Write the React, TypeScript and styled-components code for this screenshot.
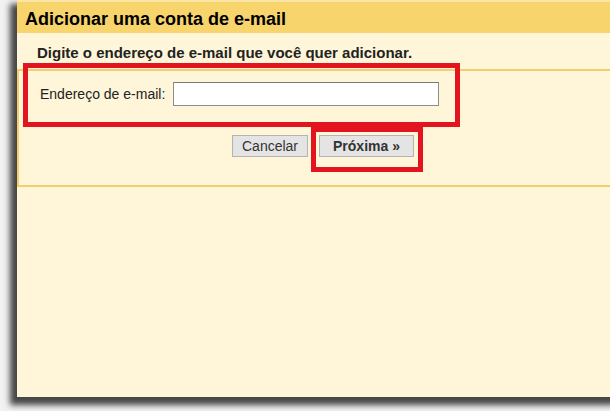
import * as React from 'react';
import styled, { createGlobalStyle } from 'styled-components';

const GlobalStyle = createGlobalStyle`
    html, body {
        margin: 0;
        padding: 0;
        background: #ffffff;
    }
    body {
        font-family: "Liberation Sans", Arial, sans-serif;
    }
`;

const Page = styled.div`
    position: relative;
    width: 610px;
    height: 411px;
    overflow: hidden;
    background: #f2f2f2;
`;

const Window = styled.div`
    margin-left: 17px;
    width: 610px;
    height: 397px;
    background: #fff6d9;
    box-shadow: -5px 6px 6px 2px rgba(60, 60, 60, 0.95);
    display: flex;
    flex-direction: column;
`;

const Header = styled.div`
    height: 33px;
    border-top: 2px solid #fae5a4;
    background: #f8d46c;
    display: flex;
    align-items: flex-end;
    padding: 0 0 3px 8px;
    box-sizing: border-box;
`;

const Title = styled.h1`
    margin: 0;
    font-size: 18px;
    font-weight: bold;
    color: #000;
`;

const Intro = styled.div`
    height: 36px;
    padding-left: 20px;
    display: flex;
    align-items: center;
    padding-top: 2px;
    box-sizing: border-box;
    font-size: 15px;
    font-weight: bold;
    color: #222;
`;

const Panel = styled.div`
    border-top: 2px solid #f3cf6c;
    border-left: 2px solid #f3cf6c;
    border-bottom: 2px solid #f3cf6c;
    padding: 11px 0 28px 21px;
    display: flex;
    flex-direction: column;
    gap: 29px;
`;

const FieldRow = styled.div`
    display: flex;
    align-items: center;
    gap: 8px;
    height: 24px;
`;

const Label = styled.label`
    font-size: 14px;
    color: #222;
`;

const Input = styled.input`
    width: 266px;
    height: 24px;
    box-sizing: border-box;
    border: 1px solid #8c8c8c;
    border-top-color: #7a7a7a;
    background: #fff;
    margin: 0;
    outline: none;
`;

const Actions = styled.div`
    display: flex;
    gap: 11px;
    padding-left: 192px;
`;

const Button = styled.button<{ $primary?: boolean }>`
    height: 22px;
    margin: 0;
    padding: ${(p) => (p.$primary ? '0 13px' : '0 9px')};
    border: 1px solid #b3b3b3;
    background: #e4e4e4;
    font-family: "Liberation Sans", Arial, sans-serif;
    font-size: 14px;
    font-weight: ${(p) => (p.$primary ? 'bold' : 'normal')};
    color: #333;
    line-height: 20px;
`;

const Highlight = styled.div<{ $x: number; $y: number; $w: number; $h: number }>`
    position: absolute;
    left: ${(p) => p.$x}px;
    top: ${(p) => p.$y}px;
    width: ${(p) => p.$w}px;
    height: ${(p) => p.$h}px;
    box-sizing: border-box;
    border: 5px solid #e2141f;
    pointer-events: none;
`;

export default function App(): JSX.Element {
    return (
        <>
            <GlobalStyle />
            <Page>
                <Window>
                    <Header>
                        <Title>Adicionar uma conta de e-mail</Title>
                    </Header>
                    <Intro>Digite o endereço de e-mail que você quer adicionar.</Intro>
                    <Panel>
                        <FieldRow>
                            <Label htmlFor="email">Endereço de e-mail:</Label>
                            <Input id="email" type="text" />
                        </FieldRow>
                        <Actions>
                            <Button>Cancelar</Button>
                            <Button $primary>Próxima »</Button>
                        </Actions>
                    </Panel>
                </Window>
                <Highlight $x={23} $y={63} $w={437} $h={64} />
                <Highlight $x={311} $y={127} $w={112} $h={45} />
            </Page>
        </>
    );
}
